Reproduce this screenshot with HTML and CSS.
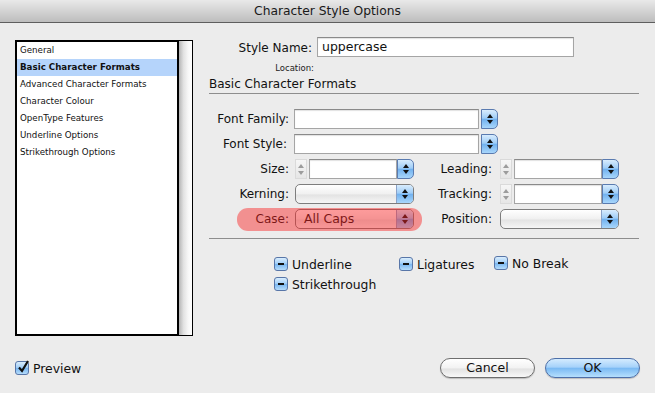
FILE: index.html
```html
<!DOCTYPE html>
<html>
<head>
	<title>Character Style Options</title>
	<meta charset="utf-8">
	<link rel="stylesheet" href="styles.css">
</head>
<body>
<div class="window">
	<div class="titlebar">Character Style Options</div>

	<div class="content">
		<!-- 左侧分类列表 -->
		<div class="sidebar">
			<ul class="list">
				<li>General</li>
				<li class="on">Basic Character Formats</li>
				<li>Advanced Character Formats</li>
				<li>Character Colour</li>
				<li>OpenType Features</li>
				<li>Underline Options</li>
				<li>Strikethrough Options</li>
			</ul>
			<div class="track"></div>
		</div>

		<!-- 右侧设置区 -->
		<div class="main">
			<div class="name-row">
				<span class="name-label">Style Name:</span>
				<div class="field name-field">uppercase</div>
			</div>
			<div class="location">Location:</div>
			<h2 class="section">Basic Character Formats</h2>

			<div class="grid">
				<span class="lbl">Font Family:</span>
				<div class="combo wide"><div class="field"></div><span class="arrows"></span></div>

				<span class="lbl">Font Style:</span>
				<div class="combo wide"><div class="field"></div><span class="arrows"></span></div>

				<span class="lbl">Size:</span>
				<div class="combo"><span class="stepper"></span><div class="field"></div><span class="arrows"></span></div>
				<span class="lbl">Leading:</span>
				<div class="combo"><span class="stepper"></span><div class="field"></div><span class="arrows"></span></div>

				<span class="lbl">Kerning:</span>
				<div class="popup"><span class="val"></span><span class="arrows"></span></div>
				<span class="lbl">Tracking:</span>
				<div class="combo"><span class="stepper"></span><div class="field"></div><span class="arrows"></span></div>

				<span class="lbl case-lbl">Case:</span>
				<div class="popup case-pop"><span class="val">All Caps</span><span class="arrows"></span></div>
				<div class="mark"></div>
				<span class="lbl">Position:</span>
				<div class="popup"><span class="val"></span><span class="arrows"></span></div>
			</div>

			<div class="rule"></div>

			<div class="checks">
				<label class="chk"><span class="box dash"></span>Underline</label>
				<label class="chk"><span class="box dash"></span>Ligatures</label>
				<label class="chk up"><span class="box dash"></span>No Break</label>
				<label class="chk"><span class="box dash"></span>Strikethrough</label>
			</div>
		</div>
	</div>

	<div class="footer">
		<label class="chk"><span class="box tick">
			<svg width="14" height="14" viewBox="0 0 14 14"><path d="M3 7.5l3 3.5 6-10" fill="none" stroke="#111" stroke-width="2.2"/></svg>
		</span>Preview</label>
		<div class="buttons">
			<span class="button">Cancel</span>
			<span class="button ok">OK</span>
		</div>
	</div>
</div>
</body>
</html>
```

FILE: styles.css
```css
body, ul, li, h2 { margin: 0; padding: 0; }
ul { list-style: none; }
body { background-color: #ececec; font-family: "Lucida Grande", "DejaVu Sans", sans-serif; font-size: 12px; color: #111; }

.window { width: 655px; height: 393px; display: flex; flex-direction: column; overflow: hidden; }
.titlebar { height: 22px; line-height: 23px; text-align: center; font-size: 12.3px; color: #1a1a1a; background: linear-gradient(#e9e9e9, #d3d3d3 50%, #bdbdbd); border-bottom: 1px solid #5e5e5e; }

.content { display: flex; align-items: flex-start; padding: 14px 15px 0 15px; }

/* 列表 */
.sidebar { display: flex; width: 176px; height: 294px; margin-top: 3px; border: 1px solid #000; }
.list { flex: 1; background-color: #fff; border: 1px solid #000; border-right-width: 2px; padding-top: 0; }
.list li { height: 17px; line-height: 17px; padding-left: 3px; font-size: 8.7px; color: #111; }
.list li.on { background-color: #b5d4fb; font-weight: 700; }
.track { width: 13px; background: linear-gradient(to right, #b5b5b5, #e2e2e2 35%, #f7f7f7 70%, #fff); }

.main { width: 430px; margin-left: 16px; }

/* 输入框 */
.field { height: 20px; box-sizing: border-box; background-color: #fff; border: 1px solid #a5a5a5; border-top-color: #8a8a8a; box-shadow: inset 0 1px 1px rgba(0,0,0,.12); }
.name-row { display: flex; align-items: center; }
.name-label { width: 103px; text-align: right; margin-right: 5px; padding-top: 1px; }
.name-field { width: 257px; padding-left: 4px; line-height: 18px; font-size: 12.5px; }
.location { width: 105px; margin-top: 5px; text-align: right; font-size: 8.5px; line-height: 12px; color: #222; }
.section { font-size: 12px; font-weight: 400; line-height: 18px; padding-top: 1px; border-bottom: 1px solid #8d8d8d; }

.grid { display: grid; grid-template-columns: 85px 120px 85px 120px; grid-auto-rows: 20px; row-gap: 5px; margin-top: 15px; }
.lbl { text-align: right; padding-right: 5px; line-height: 20px; }
.grid .lbl:nth-of-type(even) { padding-right: 7px; }
.combo { display: flex; }
.combo .field { flex: 1; }
.combo.wide { grid-column: 2 / 5; width: 204px; }
.combo.wide .arrows { margin-left: 2px; }

/* 上下箭头按钮 */
.arrows { width: 17px; height: 20px; box-sizing: border-box; display: flex; flex-direction: column; align-items: center; justify-content: center; gap: 2px; background: linear-gradient(#d8ecfd, #9fcdf7 45%, #72b2ef 52%, #a8d6fb); border: 1px solid #5a7bb0; border-radius: 0 5px 5px 0; }
.arrows::before, .arrows::after { content: ''; width: 0; height: 0; border-left: 3px solid transparent; border-right: 3px solid transparent; }
.arrows::before { border-bottom: 4px solid #111; }
.arrows::after { border-top: 4px solid #111; }

.stepper { width: 12px; margin: 0 2px 0 1px; display: flex; flex-direction: column; align-items: center; justify-content: center; gap: 3px; background: linear-gradient(#f6f6f6, #e6e6e6); border: 1px solid #dadada; box-sizing: border-box; }
.stepper::before, .stepper::after { content: ''; width: 0; height: 0; border-left: 3px solid transparent; border-right: 3px solid transparent; }
.stepper::before { border-bottom: 4px solid #9c9c9c; }
.stepper::after { border-top: 4px solid #9c9c9c; }

.popup { display: flex; margin-left: 1px; height: 20px; box-sizing: border-box; border: 1px solid #7d7d7d; border-radius: 5px; overflow: hidden; background: linear-gradient(#fff, #f0f0f0 50%, #e3e3e3 55%, #f6f6f6); }
.popup .val { flex: 1; padding-left: 8px; line-height: 18px; font-size: 12.5px; }
.popup .arrows { border: 0; border-left: 1px solid #8aa2c8; border-radius: 0; height: 18px; }

.case-lbl { grid-row: 5; grid-column: 1; }
.case-pop { grid-row: 5; grid-column: 2; }
.mark { grid-row: 5; grid-column: 1 / 3; margin: -1px -8px -2px 28px; border-radius: 11px; background-color: rgba(250, 34, 34, .45); }

.rule { margin-top: 9px; border-top: 1px solid #8d8d8d; }

/* 复选框 */
.checks { display: grid; grid-template-columns: 125px 95px auto; grid-auto-rows: 20px; padding-left: 65px; margin-top: 17px; font-size: 12.4px; }
.chk { display: flex; align-items: center; height: 16px; }
.chk.up { margin-top: -1px; }
.box { width: 14px; height: 14px; box-sizing: border-box; margin-right: 4px; display: flex; align-items: center; justify-content: center; border: 1px solid #5876a8; border-radius: 3px; background: linear-gradient(#d9edfd, #a4d0f8 45%, #79b6f0 52%, #b5dcfb); }
.box.dash::before { content: ''; width: 6px; height: 2px; background-color: #111; }
.box.tick svg { margin: -3px -2px 0 0; }

.footer { margin-top: auto; display: flex; align-items: center; justify-content: space-between; padding: 0 15px 15px 15px; font-size: 12.4px; }
.buttons { display: flex; gap: 10px; }
.button { width: 95px; height: 20px; box-sizing: border-box; line-height: 18px; text-align: center; font-size: 12.5px; border: 1px solid #6e6e6e; border-radius: 10px; background: linear-gradient(#fff, #f2f2f2 50%, #e2e2e2 55%, #f8f8f8); box-shadow: 0 1px 1px rgba(0,0,0,.2); }
.button.ok { border-color: #4d6fa8; background: linear-gradient(#d4ebfe, #a6d2fa 45%, #7bbaf3 52%, #b5dffd); }
```
